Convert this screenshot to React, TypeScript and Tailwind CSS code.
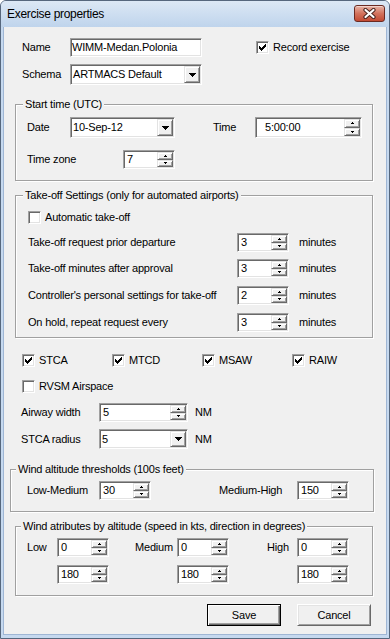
import React from "react";

const sunken =
  "bg-white border border-t-[#a0a0a0] border-l-[#a0a0a0] border-r-white border-b-white shadow-[inset_1px_1px_0_#696969,inset_-1px_-1px_0_#e3e3e3]";
const raised =
  "bg-[#f0f0f0] border border-t-[#e3e3e3] border-l-[#e3e3e3] border-r-[#696969] border-b-[#696969] shadow-[inset_1px_1px_0_#fff,inset_-1px_-1px_0_#a0a0a0]";
const etched = "border border-[#a0a0a0] shadow-[inset_1px_1px_0_#fff,1px_1px_0_#fff]";

function ArrowDown() {
  return (
    <svg width="7" height="4" viewBox="0 0 7 4" shapeRendering="crispEdges">
      <rect x="0" y="0" width="7" height="1" fill="#000" />
      <rect x="1" y="1" width="5" height="1" fill="#000" />
      <rect x="2" y="2" width="3" height="1" fill="#000" />
      <rect x="3" y="3" width="1" height="1" fill="#000" />
    </svg>
  );
}

function TinyArrow({ up }: { up?: boolean }) {
  return (
    <svg width="3" height="2" viewBox="0 0 3 2" shapeRendering="crispEdges">
      {up ? (
        <>
          <rect x="1" y="0" width="1" height="1" fill="#000" />
          <rect x="0" y="1" width="3" height="1" fill="#000" />
        </>
      ) : (
        <>
          <rect x="0" y="0" width="3" height="1" fill="#000" />
          <rect x="1" y="1" width="1" height="1" fill="#000" />
        </>
      )}
    </svg>
  );
}

function Check({ checked }: { checked?: boolean }) {
  return (
    <span className={`w-[13px] h-[13px] shrink-0 flex items-center justify-center ${sunken}`}>
      {checked && (
        <svg width="7" height="7" viewBox="0 0 7 7" shapeRendering="crispEdges">
          <rect x="6" y="0" width="1" height="1" fill="#000" />
          <rect x="5" y="1" width="2" height="1" fill="#000" />
          <rect x="0" y="2" width="1" height="1" fill="#000" />
          <rect x="4" y="2" width="3" height="1" fill="#000" />
          <rect x="0" y="3" width="2" height="1" fill="#000" />
          <rect x="3" y="3" width="3" height="1" fill="#000" />
          <rect x="0" y="4" width="5" height="1" fill="#000" />
          <rect x="1" y="5" width="3" height="1" fill="#000" />
          <rect x="2" y="6" width="1" height="1" fill="#000" />
        </svg>
      )}
    </span>
  );
}

function CheckItem({ label, checked, className = "" }: { label: string; checked?: boolean; className?: string }) {
  return (
    <div className={`flex items-center gap-[4px] h-[13px] ${className}`}>
      <Check checked={checked} />
      <span>{label}</span>
    </div>
  );
}

function Spin({ value, className = "", textClass = "pl-[2px]" }: { value: string; className?: string; textClass?: string }) {
  return (
    <div className={`flex p-[1px] shrink-0 ${sunken} ${className}`}>
      <div className={`flex-1 flex items-center ${textClass}`}>{value}</div>
      <div className="w-[16px] flex flex-col">
        <div className={`flex-1 flex items-center justify-center ${raised}`}>
          <TinyArrow up />
        </div>
        <div className={`flex-1 flex items-center justify-center ${raised}`}>
          <TinyArrow />
        </div>
      </div>
    </div>
  );
}

function Combo({ value, className = "" }: { value: string; className?: string }) {
  return (
    <div className={`flex p-[1px] shrink-0 ${sunken} ${className}`}>
      <div className="flex-1 flex items-center pl-[1px]">{value}</div>
      <div className={`w-[16px] flex items-center justify-center ${raised}`}>
        <ArrowDown />
      </div>
    </div>
  );
}

function CloseButton() {
  return (
    <div className="mt-[4px] w-[31px] h-[17px] rounded-[3px] border border-[#6b2a22] bg-linear-to-b from-[#e6b3a6] via-[#d2725d] to-[#c24a33] shadow-[inset_0_1px_0_rgba(255,255,255,0.45)] flex items-center justify-center">
      <svg width="13" height="11" viewBox="0 0 13 11">
        <path d="M2.5 2 L10.5 9 M10.5 2 L2.5 9" stroke="#4a2520" strokeWidth="4.2" strokeLinecap="round" />
        <path d="M2.5 2 L10.5 9 M10.5 2 L2.5 9" stroke="#fff" strokeWidth="2.2" strokeLinecap="round" />
      </svg>
    </div>
  );
}

function WinButton({ label, isDefault }: { label: string; isDefault?: boolean }) {
  return isDefault ? (
    <div className="w-[74px] h-[22px] border border-black bg-[#f0f0f0] shadow-[inset_1px_1px_0_#fff,inset_-1px_-1px_0_#696969,inset_-2px_-2px_0_#a0a0a0] flex items-center justify-center">
      {label}
    </div>
  ) : (
    <div className="w-[74px] h-[22px] border border-t-white border-l-white border-r-[#696969] border-b-[#696969] bg-[#f0f0f0] shadow-[inset_1px_1px_0_#e3e3e3,inset_-1px_-1px_0_#a0a0a0] flex items-center justify-center">
      {label}
    </div>
  );
}

export default function App() {
  return (
    <div className="w-[390px] h-[639px] flex flex-col overflow-hidden rounded-t-[6px] border border-[#56677d] bg-[#c6d9ef] font-['Liberation_Sans',Arial,sans-serif] text-[11px] leading-[13px] tracking-[-0.2px] text-black">
      {/* title bar */}
      <div className="h-[26px] shrink-0 flex items-start justify-between pl-[6px] pr-[4px] bg-linear-to-b from-[#dce8f5] to-[#bfd4ec]">
        <span className="mt-[6px] text-[12px] leading-[15px] tracking-[-0.3px]">Exercise properties</span>
        <CloseButton />
      </div>

      {/* client area */}
      <div className="flex-1 mx-[2px] mb-[3px] flex flex-col bg-[#f0f0f0] border border-t-0 border-[#9fb6d4]">
        <div className="flex mt-[11px] ml-[18px]">
          <div className="flex flex-col">
            <div className="flex items-center h-[19px]">
              <span className="w-[48px]">Name</span>
              <div className={`w-[132px] h-[19px] flex items-center pl-[1px] ${sunken}`}>WIMM-Medan.Polonia</div>
            </div>
            <div className="flex items-center h-[21px] mt-[7px]">
              <span className="w-[48px]">Schema</span>
              <Combo value="ARTMACS Default" className="w-[132px] h-[21px]" />
            </div>
          </div>
          <div className="ml-[54px] h-[19px] flex items-center">
            <CheckItem label="Record exercise" checked />
          </div>
        </div>

        <fieldset className={`ml-[11px] mt-[13px] w-[358px] ${etched}`}>
          <legend className="ml-[7px] px-[2px] bg-[#f0f0f0] leading-[13px]">Start time (UTC)</legend>
          <div className="pt-[6px] pl-[11px] pb-[11px] flex flex-col">
            <div className="flex items-center h-[21px]">
              <span className="w-[43px]">Date</span>
              <Combo value="10-Sep-12" className="w-[105px] h-[21px]" />
              <span className="ml-[38px] w-[42px]">Time</span>
              <Spin value="5:00:00" className="w-[107px] h-[21px]" textClass="pl-[8px]" />
            </div>
            <div className="flex items-center h-[19px] mt-[12px]">
              <span className="w-[96px]">Time zone</span>
              <Spin value="7" className="w-[52px] h-[19px]" />
            </div>
          </div>
        </fieldset>

        <fieldset className={`ml-[11px] mt-[8px] w-[358px] ${etched}`}>
          <legend className="ml-[7px] px-[2px] bg-[#f0f0f0] leading-[13px]">Take-off Settings (only for automated airports)</legend>
          <div className="pt-[9px] pl-[12px] pb-[5px] flex flex-col">
            <CheckItem label="Automatic take-off" />
            {[
              ["Take-off request prior departure", "3", "mt-[9px]"],
              ["Take-off minutes after approval", "3", "mt-[7px]"],
              ["Controller's personal settings for take-off", "2", "mt-[8px]"],
              ["On hold, repeat request every", "3", "mt-[8px]"],
            ].map(([label, value, mt]) => (
              <div key={label} className={`flex items-center h-[19px] ${mt}`}>
                <span className="w-[209px]">{label}</span>
                <Spin value={value} className="w-[52px] h-[19px]" />
                <span className="ml-[10px]">minutes</span>
              </div>
            ))}
          </div>
        </fieldset>

        <div className="flex mt-[16px] ml-[18px]">
          <CheckItem label="STCA" checked className="w-[90px]" />
          <CheckItem label="MTCD" checked className="w-[90px]" />
          <CheckItem label="MSAW" checked className="w-[90px]" />
          <CheckItem label="RAIW" checked className="w-[90px]" />
        </div>
        <CheckItem label="RVSM Airspace" className="mt-[13px] ml-[18px]" />

        <div className="flex items-center h-[19px] mt-[10px] ml-[17px]">
          <span className="w-[78px]">Airway width</span>
          <Spin value="5" className="w-[89px] h-[19px]" />
          <span className="ml-[7px]">NM</span>
        </div>
        <div className="flex items-center h-[20px] mt-[7px] ml-[17px]">
          <span className="w-[78px]">STCA radius</span>
          <Combo value="5" className="w-[89px] h-[20px]" />
          <span className="ml-[7px]">NM</span>
        </div>

        <fieldset className={`ml-[6px] mt-[14px] w-[364px] ${etched}`}>
          <legend className="ml-[5px] px-[2px] bg-[#f0f0f0] leading-[13px]">Wind altitude thresholds (100s feet)</legend>
          <div className="pt-[5px] pl-[16px] pb-[11px]">
            <div className="flex items-center h-[19px]">
              <span className="w-[72px]">Low-Medium</span>
              <Spin value="30" className="w-[52px] h-[19px]" />
              <span className="ml-[68px] w-[78px]">Medium-High</span>
              <Spin value="150" className="w-[52px] h-[19px]" />
            </div>
          </div>
        </fieldset>

        <fieldset className={`ml-[11px] mt-[8px] w-[358px] ${etched}`}>
          <legend className="ml-[5px] px-[2px] bg-[#f0f0f0] leading-[13px]">Wind atributes by altitude (speed in kts, direction in degrees)</legend>
          <div className="pt-[5px] pl-[11px] pb-[11px] flex flex-col">
            <div className="flex items-center h-[19px]">
              <span className="w-[30px]">Low</span>
              <Spin value="0" className="w-[52px] h-[19px]" />
              <span className="ml-[26px] w-[42px]">Medium</span>
              <Spin value="0" className="w-[52px] h-[19px]" />
              <span className="ml-[38px] w-[30px]">High</span>
              <Spin value="0" className="w-[52px] h-[19px]" />
            </div>
            <div className="flex items-center h-[19px] mt-[8px]">
              <span className="w-[30px]" />
              <Spin value="180" className="w-[52px] h-[19px]" />
              <span className="ml-[26px] w-[42px]" />
              <Spin value="180" className="w-[52px] h-[19px]" />
              <span className="ml-[38px] w-[30px]" />
              <Spin value="180" className="w-[52px] h-[19px]" />
            </div>
          </div>
        </fieldset>

        <div className="flex justify-end gap-[16px] pr-[15px] mt-[8px]">
          <WinButton label="Save" isDefault />
          <WinButton label="Cancel" />
        </div>
      </div>
    </div>
  );
}
